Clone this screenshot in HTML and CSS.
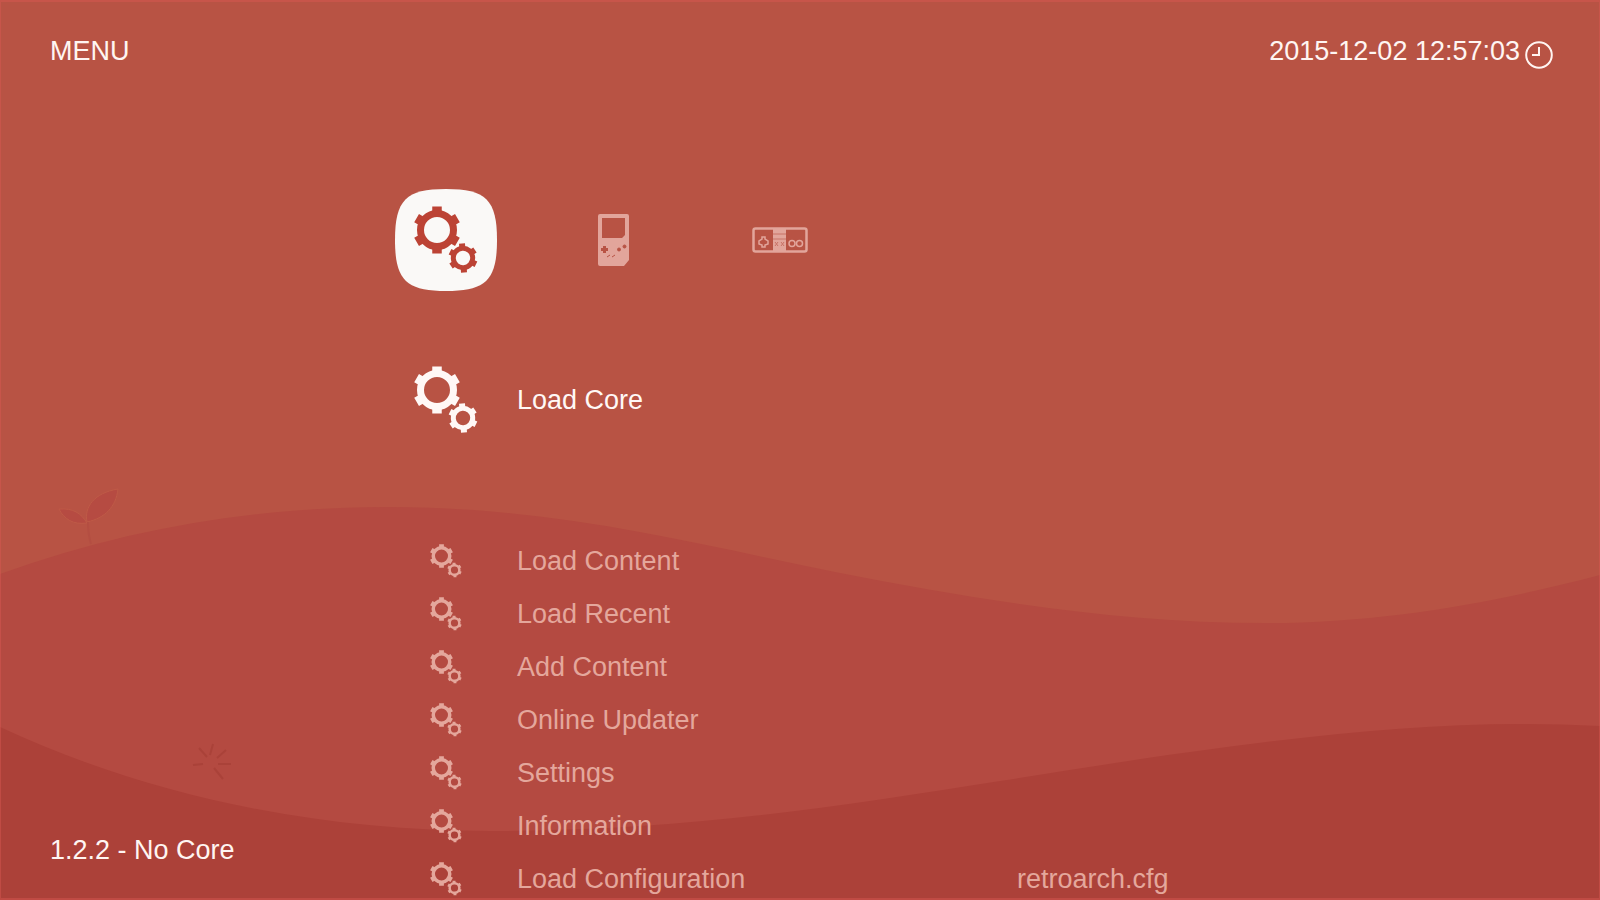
FILE: index.html
```
<!DOCTYPE html>
<html lang="en">

<head>
  <meta charset="UTF-8">
  <meta name="viewport" content="width=device-width, initial-scale=1.0">
  <title>RetroArch</title>
  <link rel="stylesheet" href="styles.css">
</head>

<body>
  <!-- shared icons -->
  <svg class="sprite" aria-hidden="true">
    <symbol id="gears" viewBox="0 0 64 68">
      <g fill="none" stroke="currentColor" stroke-linejoin="round">
        <circle cx="23" cy="24" r="16.5" stroke-width="7" />
        <path stroke-width="9.5" d="M23 0.500v8M23 39.500v8M2.600 12.200l6.900 4M36.500 31.800l6.900 4M2.600 35.800l6.900-4M36.500 16.200l6.900-4" />
        <g transform="rotate(-4 49 52)">
          <circle cx="49" cy="52" r="9.700" stroke-width="5" />
          <path stroke-width="6" d="M49 37.500v5M49 61.500v5M36.500 44.800l4.300 2.500M57.200 56.700l4.300 2.500M36.500 59.200l4.300-2.500M57.200 47.300l4.300-2.500" />
        </g>
      </g>
    </symbol>
  </svg>

  <svg class="wallpaper" viewBox="0 0 1600 900" preserveAspectRatio="none" aria-hidden="true">
    <path class="hill-back" d="M0 574C130 527 260 507 388 507C560 507 700 545 840 573C980 600 1120 623 1265 623C1380 623 1490 604 1600 575V900H0Z" />
    <path class="hill-front" d="M0 727C150 797 320 831 490 831C680 831 830 808 1000 781C1200 749 1370 724 1520 724Q1560 724 1600 726V900H0Z" />
    <g class="plant">
      <path d="M87 522C84 507 94 493 118 489C116 507 105 518 87 522Z" />
      <path d="M87 523C73 525 64 519 59 509C73 508 81 513 87 523Z" />
      <path class="stem" d="M88 522Q88 534 91 544" />
    </g>
    <path class="burst" d="M199 748l8 9M213 744l-3 11M226 750l-9 8M193 765l10-1M218 764h13M214 768l9 11" />
  </svg>

  <header class="topbar">
    <h1>MENU</h1>
    <div class="clock">
      <time datetime="2015-12-02T12:57:03">2015-12-02 12:57:03</time>
      <svg viewBox="0 0 28 28" aria-hidden="true">
        <circle cx="14" cy="14" r="12.800" />
        <path d="M14 6v8H7" />
      </svg>
    </div>
  </header>

  <main>
    <nav class="tabs">
      <button class="tab active" aria-label="Main menu">
        <svg class="tile" viewBox="0 0 102 102" aria-hidden="true">
          <path fill="currentColor" d="M51 0C91 0 102 11 102 51C102 91 91 102 51 102C11 102 0 91 0 51C0 11 11 0 51 0Z" />
          <use class="tile-gears" href="#gears" x="19" y="17" width="64" height="68" />
        </svg>
      </button>
      <button class="tab" aria-label="Game Boy">
        <svg class="gameboy" viewBox="0 0 31 52" aria-hidden="true">
          <path fill="currentColor" fill-rule="evenodd" d="M2 0H29Q31 0 31 2V46L26 52H2Q0 52 0 50V2Q0 0 2 0ZM4 4V24H24L27 21V4ZM5 32V34H3V37H5V39H8V37H10V34H8V32Z" />
          <g class="cut">
            <circle cx="21" cy="35.500" r="1.500" />
            <circle cx="26.500" cy="32.500" r="1.500" />
            <path d="M9 43l3-2M14 43l3-2" />
          </g>
        </svg>
      </button>
      <button class="tab" aria-label="NES">
        <svg class="nes" viewBox="0 0 56 26" aria-hidden="true">
          <rect x="1.500" y="1.500" width="53" height="23" rx="2" fill="none" stroke="currentColor" stroke-width="2.500" />
          <path fill="currentColor" d="M21 2h13v22H21z" />
          <path fill="none" stroke="currentColor" stroke-width="1.500" d="M10 10h3v2l3 2v3l-3 1v2h-3v-2l-3-1v-3l3-2z" />
          <g fill="none" stroke="currentColor" stroke-width="1.500">
            <circle cx="40" cy="16.500" r="3" />
            <circle cx="47.500" cy="16.500" r="3" />
          </g>
          <path class="cut" d="M21 7h13M21 12h13M23 15l3 4M26 15l-3 4M29 15l3 4M32 15l-3 4" />
        </svg>
      </button>
    </nav>

    <a class="entry selected" href="#">
      <svg aria-hidden="true"><use href="#gears" /></svg>
      <span>Load Core</span>
    </a>

    <ul class="entries">
      <li><a class="entry" href="#"><svg aria-hidden="true"><use href="#gears" /></svg><span>Load Content</span></a></li>
      <li><a class="entry" href="#"><svg aria-hidden="true"><use href="#gears" /></svg><span>Load Recent</span></a></li>
      <li><a class="entry" href="#"><svg aria-hidden="true"><use href="#gears" /></svg><span>Add Content</span></a></li>
      <li><a class="entry" href="#"><svg aria-hidden="true"><use href="#gears" /></svg><span>Online Updater</span></a></li>
      <li><a class="entry" href="#"><svg aria-hidden="true"><use href="#gears" /></svg><span>Settings</span></a></li>
      <li><a class="entry" href="#"><svg aria-hidden="true"><use href="#gears" /></svg><span>Information</span></a></li>
      <li><a class="entry" href="#"><svg aria-hidden="true"><use href="#gears" /></svg><span>Load Configuration</span><span>retroarch.cfg</span></a></li>
    </ul>
  </main>

  <footer class="version">1.2.2 - No Core</footer>
</body>

</html>
```
FILE: styles.css
```
* {
  box-sizing: border-box;
  margin: 0;
  padding: 0;
}

body {
  position: relative;
  height: 100vh;
  overflow: hidden;
  background: #b85344;
  color: #fff5f2;
  font-family: "Liberation Sans", Arial, sans-serif;
  font-size: 27px;
  line-height: 32px;
}

/* thin lighter frame round the screen */
body::after {
  content: "";
  position: absolute;
  inset: 0;
  border: 2px solid rgba(222, 90, 84, 0.4);
  border-width: 2px 1px 2px 1px;
  pointer-events: none;
}

.sprite {
  position: absolute;
  width: 0;
  height: 0;
}

/* Wallpaper */
.wallpaper {
  position: absolute;
  inset: 0;
  z-index: -1;
  width: 100%;
  height: 100%;
}

.hill-back {
  fill: #b44a41;
}

.hill-front {
  fill: #ac4139;
}

.plant {
  fill: #b64b42;
  stroke: #bf5a47;
  stroke-width: 1;
}

.plant .stem {
  fill: none;
  stroke: #b44e42;
  stroke-width: 2;
}

.burst {
  fill: none;
  stroke: #aa4239;
  stroke-width: 2;
}

/* Top bar */
.topbar {
  display: flex;
  justify-content: space-between;
  height: 189px;
  padding: 35px 47px 0 50px;
}

.topbar h1 {
  font-size: 27px;
  font-weight: normal;
}

.clock {
  display: flex;
  align-items: flex-start;
  gap: 5px;
}

.clock svg {
  width: 28px;
  height: 28px;
  margin-top: 6px;
  fill: none;
  stroke: currentColor;
  stroke-width: 2;
}

/* Menu */
main {
  padding-left: 395px;
}

.tabs {
  display: flex;
  gap: 65px;
}

.tab {
  display: flex;
  justify-content: center;
  align-items: center;
  width: 102px;
  height: 102px;
  background: none;
  border: none;
  color: #e2a59b;
  cursor: pointer;
}

.tab.active {
  color: #faf9f7;
}

.tile {
  width: 102px;
  height: 102px;
}

.tile-gears {
  color: #bc4335;
}

.gameboy {
  width: 31px;
  height: 52px;
}

.gameboy .cut {
  fill: #b85344;
  stroke: #b85344;
  stroke-width: 1;
}

.nes {
  width: 56px;
  height: 26px;
}

.nes .cut {
  fill: none;
  stroke: #c87266;
  stroke-width: 1;
}

.entry {
  display: grid;
  grid-template-columns: 102px 480px 1fr;
  column-gap: 20px;
  align-items: center;
  height: 53px;
  color: #e4a79c;
  text-decoration: none;
}

.entry svg {
  justify-self: center;
  width: 32px;
  height: 34px;
}

.entry.selected {
  height: 68px;
  margin: 75px 0 100px;
  color: #fff8f6;
}

.entry.selected svg {
  width: 64px;
  height: 68px;
}

.entries {
  list-style: none;
}

.version {
  position: absolute;
  left: 50px;
  bottom: 34px;
}
```
